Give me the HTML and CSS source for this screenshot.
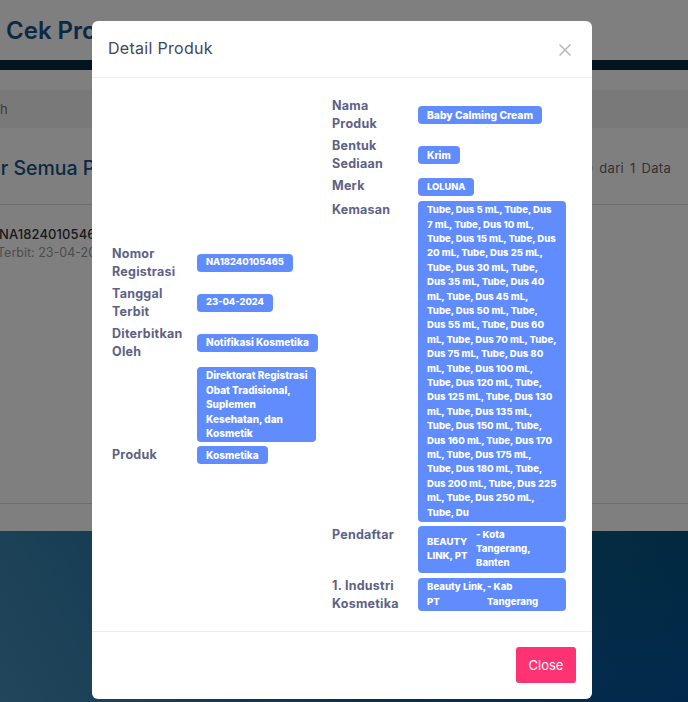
FILE: index.html
```html
<!DOCTYPE html>
<html lang="id">
<head>
<meta charset="utf-8">
<title>Detail Produk</title>
<link rel="stylesheet" href="styles.css">
</head>
<body>
<div class="page">
  <header class="topbar"><h1 class="brand">Cek Produk</h1></header>
  <div class="band"></div>
  <div class="crumb"><span class="crumb-text">h</span></div>
  <div class="list-head">
    <h2 class="list-title">Daftar Semua Produk</h2>
    <span class="list-count">0 dari 1 Data</span>
  </div>
  <div class="list-body">
    <div class="item-id">NA18240105465</div>
    <div class="item-date">Terbit: 23-04-2024</div>
  </div>
  <div class="list-foot"></div>
  <div class="hero"></div>

  <div class="overlay"></div>

  <div class="modal">
    <div class="modal-head">
      <h3 class="modal-title">Detail Produk</h3>
      <svg class="close-x" width="12" height="12" viewBox="0 0 12 12"><path d="M.5.5l11 11M11.5.5l-11 11"/></svg>
    </div>
    <div class="modal-body">
      <div class="col col-left">
        <div class="row"><div class="label">Nomor<br>Registrasi</div><div class="value"><span class="badge badge-num">NA18240105465</span></div></div>
        <div class="row"><div class="label">Tanggal<br>Terbit</div><div class="value"><span class="badge badge-num">23-04-2024</span></div></div>
        <div class="row"><div class="label">Diterbitkan<br>Oleh</div><div class="value"><span class="badge badge-text">Notifikasi Kosmetika</span></div></div>
        <div class="row row-far"><div class="label"></div><div class="value"><span class="badge badge-text">Direktorat Registrasi<br>Obat Tradisional,<br>Suplemen<br>Kesehatan, dan<br>Kosmetik</span></div></div>
        <div class="row"><div class="label">Produk</div><div class="value"><span class="badge badge-text">Kosmetika</span></div></div>
      </div>
      <div class="col col-right">
        <div class="row"><div class="label">Nama<br>Produk</div><div class="value"><span class="badge badge-wide">Baby Calming Cream</span></div></div>
        <div class="row"><div class="label">Bentuk<br>Sediaan</div><div class="value"><span class="badge badge-text">Krim</span></div></div>
        <div class="row row-top row-merk"><div class="label">Merk</div><div class="value"><span class="badge badge-num">LOLUNA</span></div></div>
        <div class="row row-top"><div class="label">Kemasan</div><div class="value"><span class="badge">Tube, Dus 5 mL, Tube, Dus<br>7 mL, Tube, Dus 10 mL,<br>Tube, Dus 15 mL, Tube, Dus<br>20 mL, Tube, Dus 25 mL,<br>Tube, Dus 30 mL, Tube,<br>Dus 35 mL, Tube, Dus 40<br>mL, Tube, Dus 45 mL,<br>Tube, Dus 50 mL, Tube,<br>Dus 55 mL, Tube, Dus 60<br>mL, Tube, Dus 70 mL, Tube,<br>Dus 75 mL, Tube, Dus 80<br>mL, Tube, Dus 100 mL,<br>Tube, Dus 120 mL, Tube,<br>Dus 125 mL, Tube, Dus 130<br>mL, Tube, Dus 135 mL,<br>Tube, Dus 150 mL, Tube,<br>Dus 160 mL, Tube, Dus 170<br>mL, Tube, Dus 175 mL,<br>Tube, Dus 180 mL, Tube,<br>Dus 200 mL, Tube, Dus 225<br>mL, Tube, Dus 250 mL,<br>Tube, Du</span></div></div>
        <div class="row row-top"><div class="label">Pendaftar</div><div class="value"><span class="badge badge-split badge-center"><span class="part part-a">BEAUTY<br>LINK, PT</span><span class="part">- Kota<br>Tangerang,<br>Banten</span></span></div></div>
        <div class="row"><div class="label">1. Industri<br>Kosmetika</div><div class="value"><span class="badge badge-split"><span class="part part-b">Beauty Link,<br>PT</span><span class="part">- Kab<br>Tangerang</span></span></div></div>
      </div>
    </div>
    <div class="modal-foot"><button class="btn-close">Close</button></div>
  </div>
</div>
</body>
</html>
```
FILE: styles.css
```css
* { box-sizing: border-box; }
html, body { margin: 0; padding: 0; }
body { font-family: "Inter", "Noto Sans", "Liberation Sans", sans-serif; background: #fff; }
.page { position: relative; width: 688px; height: 702px; overflow: hidden; background: #fff; }

.topbar { height: 60px; padding: 0 6px; display: flex; align-items: center; background: #fff; }
.brand { margin: 0; font-size: 24px; font-weight: 600; color: #17518c; white-space: nowrap; }
.band { height: 10px; background: #05283e; }
.crumb { margin-top: 20px; height: 38px; padding-top: 11px; background: #f3f3f3; }
.crumb-text { display: block; font-size: 13px; color: #777; }
.list-head { height: 77px; display: flex; justify-content: space-between; align-items: center; border-bottom: 1px solid #ddd; padding: 3px 17px 0 0; }
.list-title { margin: 0 0 0 -49px; font-size: 19.5px; font-weight: 500; color: #17518c; white-space: nowrap; }
.list-count { font-size: 13px; color: #666; letter-spacing: .3px; word-spacing: 2px; }
.list-body { height: 299px; padding-top: 20px; border-bottom: 1px solid #ddd; }
.item-id { margin-left: -1px; font-size: 13px; font-weight: 500; line-height: 18px; color: #333; letter-spacing: .1px; white-space: nowrap; }
.item-date { margin: 1px 0 0 -3px; font-size: 12.5px; line-height: 18px; color: #999; white-space: nowrap; }
.list-foot { height: 27px; background: #fff; }
.hero {
  height: 171px;
  background:
    linear-gradient(160deg, rgba(2, 82, 160, 0) 50%, rgba(2, 82, 160, .8) 100%),
    linear-gradient(60deg, #448eb8 0%, #1c6a9e 45%, #045278 100%);
}

.overlay { position: absolute; inset: 0; background: rgba(0, 0, 0, .5); }

.modal { position: absolute; left: 92px; top: 21px; width: 500px; height: 678px; background: #fff; border-radius: 6px; display: flex; flex-direction: column; }
.modal-head { height: 57px; flex: none; display: flex; justify-content: space-between; align-items: center; padding: 0 21px 2px 16px; border-bottom: 1px solid #ebedf2; }
.modal-title { margin: 0; font-size: 16px; font-weight: 400; color: #434659; letter-spacing: .3px; }
.close-x { margin-top: 4px; fill: none; stroke: #b4b6c0; stroke-width: 1.5; }
.modal-body { flex: 1; display: flex; align-items: center; gap: 10px; padding: 0 20px; }
.col { display: flex; flex-direction: column; gap: 4px; }
.col-left { width: 210px; }
.col-right { width: 240px; margin-top: 1px; }
.row { display: flex; align-items: center; }
.row-top { align-items: flex-start; }
.row-far { margin-top: 2px; }
.row-merk { height: 20px; }
.row-merk .value { padding-top: 1px; }
.label { flex: none; width: 85px; font-size: 12.5px; font-weight: 700; line-height: 18px; color: #5d6285; letter-spacing: .25px; }
.col-right .label { width: 86px; }
.value { flex: 1; min-width: 0; display: flex; }
.badge { display: inline-block; padding: 1.8px 9px; border-radius: 4px; background: #608cfd; color: #fff; font-size: 9.6px; font-weight: 800; line-height: 14.4px; white-space: nowrap; }
.badge-num { font-size: 9.3px; }
.badge-text { font-size: 10px; }
.badge-wide { font-size: 10.3px; }
.badge-split { display: flex; width: 148px; }
.badge-center { align-items: center; }
.part-a { width: 49px; flex: none; }
.part-b { width: 60px; flex: none; }
.modal-foot { height: 68px; flex: none; display: flex; justify-content: flex-end; align-items: flex-start; padding: 15px 16px 0; border-top: 1px solid #ebedf2; }
.btn-close { width: 60px; height: 36px; padding: 0; border: 0; border-radius: 3px; background: #ff3273; color: #fff; font-family: inherit; font-size: 13px; font-weight: 400; }
```
